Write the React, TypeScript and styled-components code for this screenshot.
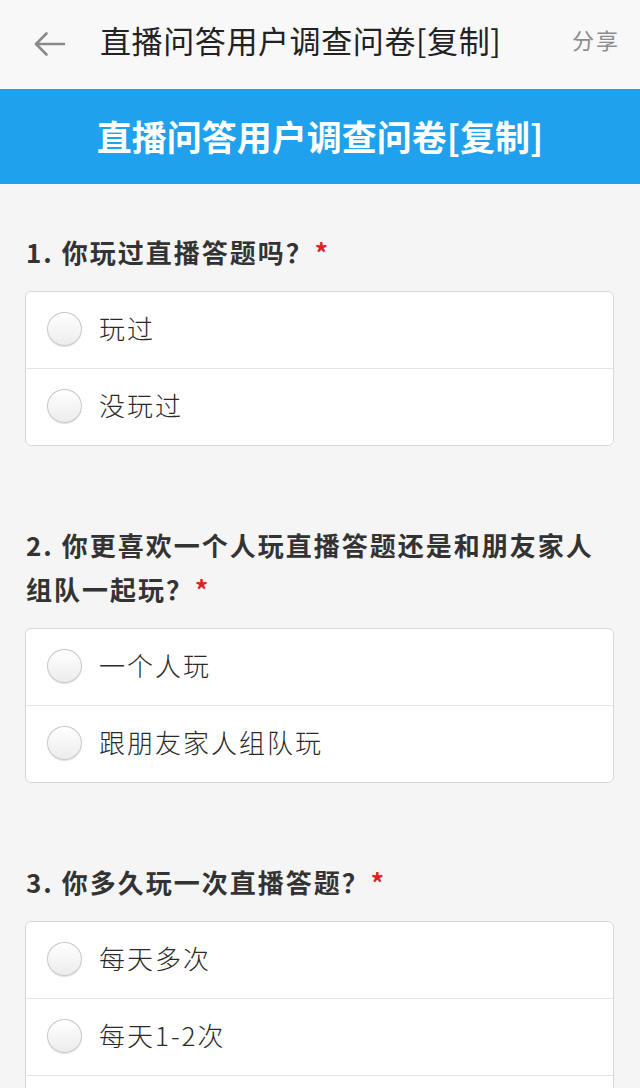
import React from "react";
import styled, { createGlobalStyle } from "styled-components";

const GlobalStyle = createGlobalStyle`
  html, body {
    margin: 0;
    padding: 0;
    background: #f5f5f5;
    font-family: "Noto Sans CJK SC", "Noto Sans", sans-serif;
  }
  * { box-sizing: border-box; }
`;

const Page = styled.div`
  width: 640px;
  min-height: 1088px;
  background: #f5f5f5;
  overflow: hidden;
`;

const TopBar = styled.div`
  height: 89px;
  background: #f8f8f8;
  display: flex;
  align-items: center;
  padding: 0 20px 0 33px;
`;

const BackButton = styled.div`
  width: 33px;
  height: 28px;
  display: flex;
  align-items: center;
  color: #8a8a8a;
  margin-top: -2px;
`;

const TopTitle = styled.div`
  flex: 1;
  margin-left: 34px;
  font-size: 31px;
  letter-spacing: 0.6px;
  color: #222;
  white-space: nowrap;
  margin-top: -10px;
`;

const Share = styled.div`
  font-size: 22px;
  letter-spacing: 2px;
  color: #8c8c8c;
  margin-top: -12px;
`;

const Banner = styled.div`
  height: 95px;
  background: #1fa1ee;
  display: flex;
  align-items: center;
  justify-content: center;
  color: #fff;
  font-size: 35px;
  font-weight: 700;
  padding-bottom: 2px;
`;

const Main = styled.div`
  display: flex;
  flex-direction: column;
  gap: 77px;
  padding: 46px 26px 0 25px;
`;

const Section = styled.div`
  display: flex;
  flex-direction: column;
  gap: 17px;
`;

const QuestionTitle = styled.div`
  font-size: 26px;
  line-height: 44px;
  font-weight: 700;
  letter-spacing: 2px;
  color: #333;
  padding-left: 1px;
`;

const Required = styled.span`
  color: #e02020;
  margin-left: 1px;
  font-size: 26px;
`;

const Card = styled.div`
  background: #fff;
  border: 1px solid #d8d8d8;
  border-radius: 6px;
  overflow: hidden;
`;

const OptionRow = styled.div<{ $last?: boolean }>`
  height: ${(p) => (p.$last ? 76 : 77)}px;
  display: flex;
  align-items: center;
  padding-left: 21px;
  border-bottom: ${(p) => (p.$last ? "none" : "1px solid #e4e4e4")};
`;

const Radio = styled.span`
  width: 35px;
  height: 34px;
  border-radius: 50%;
  border: 1px solid #c8c8c8;
  background: linear-gradient(#ffffff, #ececec);
  box-shadow: 0 1px 1px rgba(0, 0, 0, 0.12);
  flex-shrink: 0;
  margin-top: -2px;
`;

const OptionText = styled.span`
  margin-left: 17px;
  font-size: 26px;
  line-height: 1;
  font-weight: 300;
  letter-spacing: 2px;
  color: #2a2a2a;
  margin-top: -4px;
`;

type Question = { title: string; options: string[] };

const questions: Question[] = [
  { title: "1. 你玩过直播答题吗？", options: ["玩过", "没玩过"] },
  {
    title: "2. 你更喜欢一个人玩直播答题还是和朋友家人组队一起玩？",
    options: ["一个人玩", "跟朋友家人组队玩"],
  },
  {
    title: "3. 你多久玩一次直播答题？",
    options: ["每天多次", "每天1-2次", "每周几次"],
  },
];

const BackArrow = () => (
  <svg width="33" height="26" viewBox="0 0 33 26" fill="none">
    <path
      d="M31 13H3M13.5 2.5L3 13l10.5 10.5"
      stroke="currentColor"
      strokeWidth="2.6"
      strokeLinecap="round"
      strokeLinejoin="round"
    />
  </svg>
);

export default function App() {
  return (
    <Page>
      <GlobalStyle />
      <TopBar>
        <BackButton>
          <BackArrow />
        </BackButton>
        <TopTitle>直播问答用户调查问卷[复制]</TopTitle>
        <Share>分享</Share>
      </TopBar>
      <Banner>直播问答用户调查问卷[复制]</Banner>
      <Main>
        {questions.map((q) => (
          <Section key={q.title}>
            <QuestionTitle>
              {q.title}
              <Required>*</Required>
            </QuestionTitle>
            <Card>
              {q.options.map((o, i) => (
                <OptionRow key={o} $last={i === q.options.length - 1}>
                  <Radio />
                  <OptionText>{o}</OptionText>
                </OptionRow>
              ))}
            </Card>
          </Section>
        ))}
      </Main>
    </Page>
  );
}
